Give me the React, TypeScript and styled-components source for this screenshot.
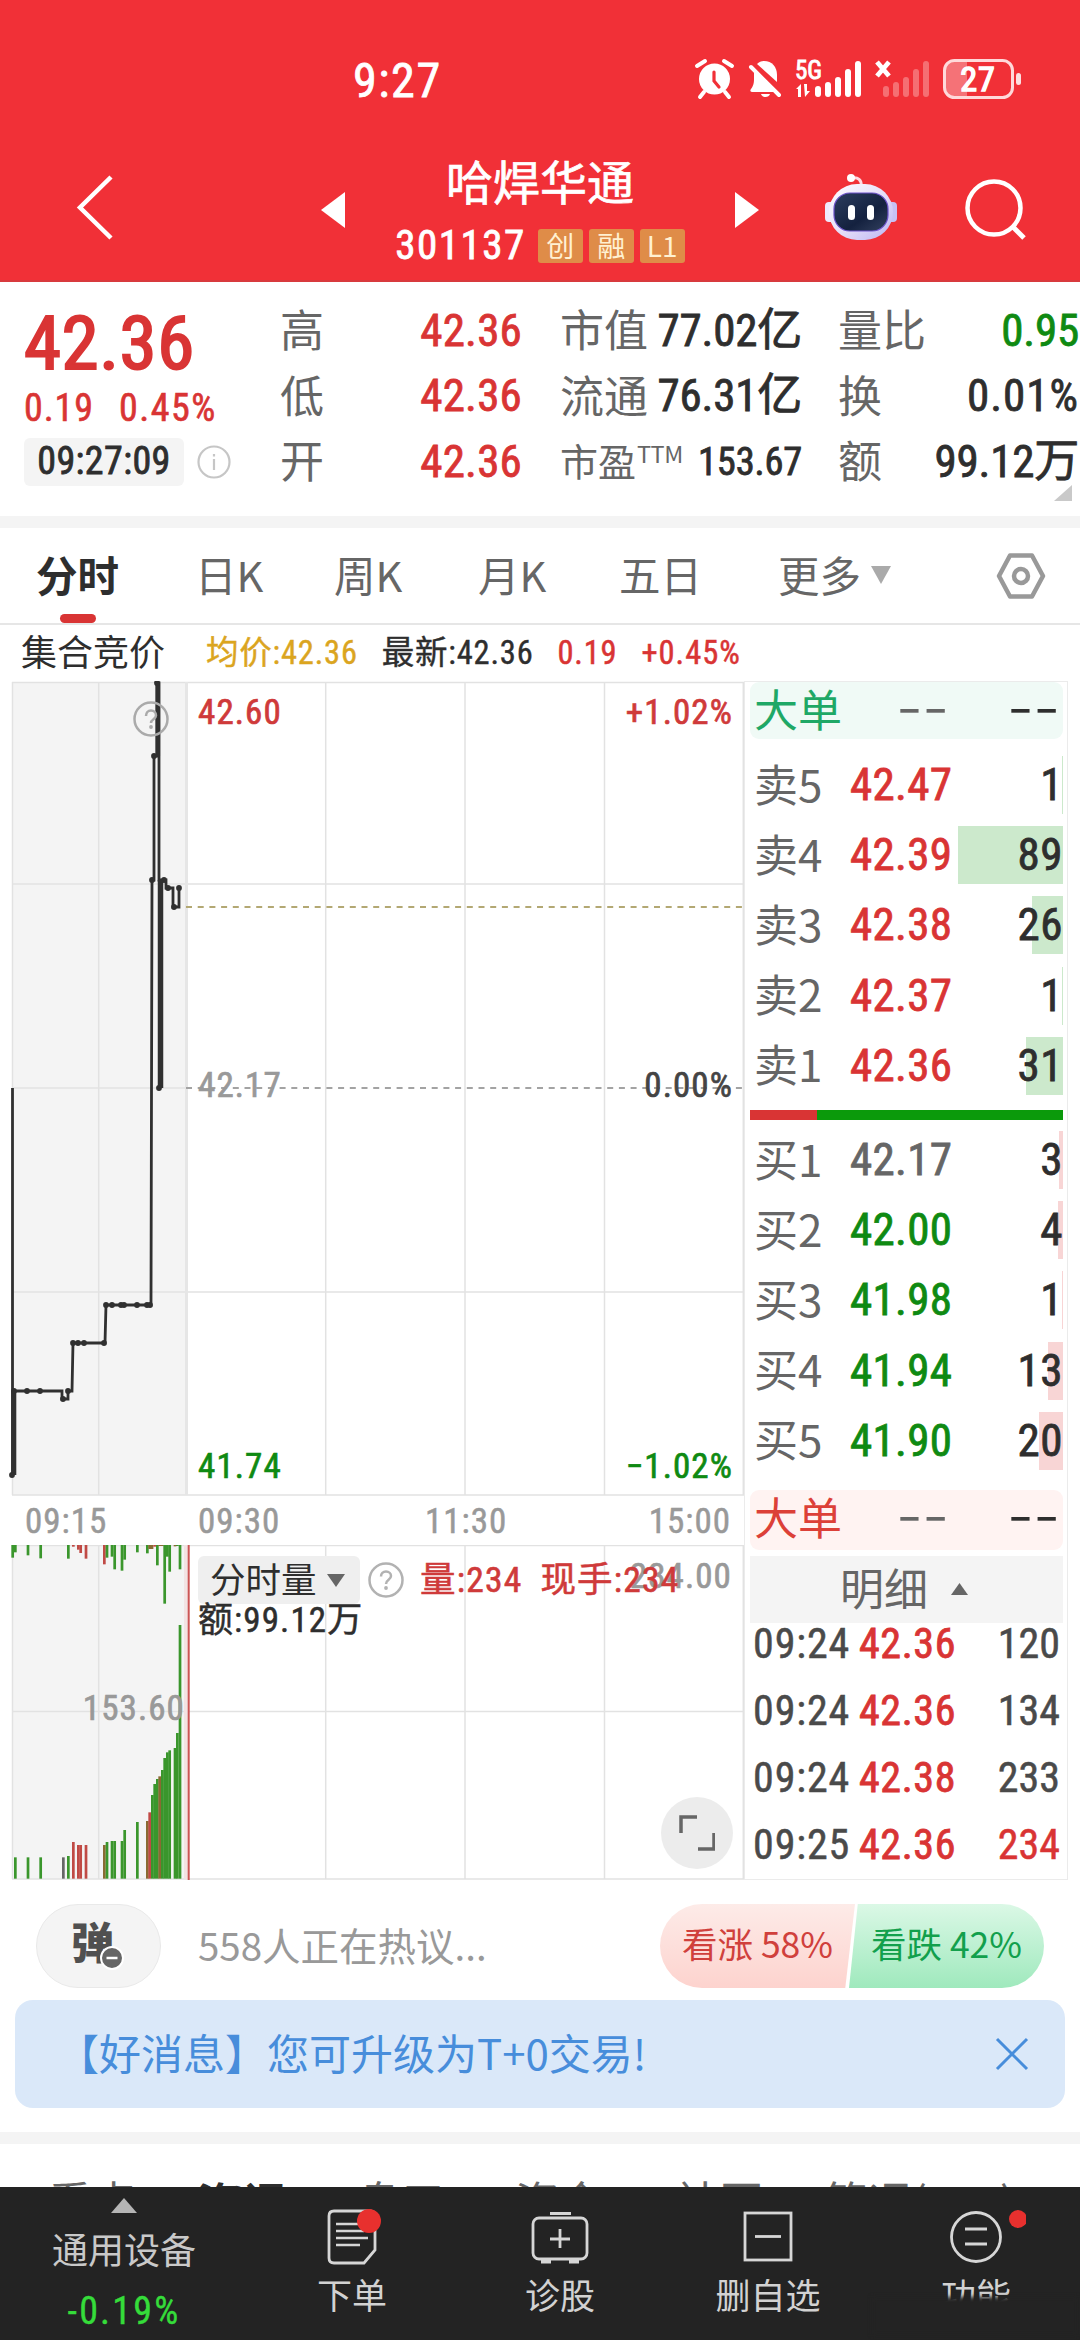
import React from 'react';
import styled, { createGlobalStyle, css } from 'styled-components';

const RED = '#d93434';
const GREEN = '#0f8a12';
const INK = '#2e2e2e';
const GREY = '#666';
const NUM = '"Roboto Condensed", Roboto, "Noto Sans CJK SC", sans-serif';
const CJK = '"Noto Sans CJK SC", "Noto Sans", sans-serif';

const Global = createGlobalStyle`
  * { box-sizing: border-box; }
  html, body { margin: 0; padding: 0; background: #fff; }
  body { font-family: ${CJK}; color: ${INK}; }
  svg { display: block; flex: none; }
`;

const Screen = styled.div`
  width: 1080px;
  height: 2340px;
  overflow: hidden;
  display: flex;
  flex-direction: column;
  background: #fff;
`;

const Num = styled.span<{ $size?: number; $color?: string; $ls?: number; $bold?: number }>`
  font-family: ${NUM};
  font-size: ${p => p.$size ?? 45}px;
  line-height: 1.2;
  color: ${p => p.$color ?? INK};
  letter-spacing: ${p => p.$ls ?? 0}px;
  -webkit-text-stroke: ${p => p.$bold ?? 0.8}px currentColor;
  white-space: nowrap;
`;

const Word = styled.span<{ $size?: number; $color?: string; $weight?: number; $ls?: number; $stroke?: number }>`
  font-family: ${CJK};
  font-size: ${p => p.$size ?? 44}px;
  line-height: 1.2;
  padding-bottom: 4px;
  color: ${p => p.$color ?? GREY};
  font-weight: ${p => p.$weight ?? 400};
  letter-spacing: ${p => p.$ls ?? 0}px;
  -webkit-text-stroke: ${p => p.$stroke ?? 0}px currentColor;
  white-space: nowrap;
`;

/* ---------- header ---------- */
const Header = styled.header`
  flex: none;
  height: 282px;
  background: #f13037;
  border-bottom: 2px solid #d83a3e;
`;
const StatusBar = styled.div`
  height: 144px;
  padding: 52px 58px 0 353px;
  display: flex;
  align-items: flex-start;
  justify-content: space-between;
  & > svg { margin-top: 3px; }
`;
const TitleBar = styled.div`
  display: grid;
  grid-template-columns: 321px 438px 1fr;
`;
const BackArea = styled.div`padding: 30px 0 0 75px;`;
const TitleArea = styled.div`
  display: grid;
  grid-template-columns: 24px 1fr 24px;
`;
const Arrow = styled.div`padding-top: 48px;`;
const TitleText = styled.div`
  display: flex;
  flex-direction: column;
  align-items: center;
  padding-top: 8px;
`;
const CodeLine = styled.div`
  display: flex;
  align-items: center;
  gap: 6px;
  margin-top: 9px;
`;
const Code = styled(Num)`margin-right: 6px;`;
const Tag = styled.span`
  min-width: 45px;
  height: 34px;
  padding: 0 7px;
  border-radius: 3px;
  background: #df8c48;
  color: #fff1d2;
  font: 400 28px/32px ${CJK};
  text-align: center;
`;
const HeaderTools = styled.div`
  display: flex;
  padding: 28px 0 0 65px;
  gap: 66px;
`;

function StatusIcons() {
  const tops = [86, 82, 77, 69, 61];
  const xs = [815, 825, 835, 845, 855];
  return (
    <svg width="332" height="50" viewBox="690 55 332 50">
      <g fill="#fff">
        <circle cx="714.500" cy="79" r="15.500" />
        <path d="M704 92l-4 5M725 92l4 5M697 66l8-5M732 66l-8-5" stroke="#fff" strokeWidth="4" strokeLinecap="round" />
        <path d="M714 72v9l5 6" stroke="#f13037" strokeWidth="3.200" fill="none" strokeLinecap="round" />
        <path d="M757 64c2-2 4-3 7-3 8 0 13 6 13 14v7z" />
        <path d="M752 92c-2 0-2-2-1-3 2-3 3-5 3-10V70l22 22z" />
        <path d="M751 67l28 28" stroke="#fff" strokeWidth="4" strokeLinecap="round" />
        <path d="M761 94h9c-1 4-8 4-9 0z" />
        {xs.map((x, i) => <rect key={x} x={x} y={tops[i]} width="6" height={97 - tops[i]} rx="3" />)}
        <path d="M796 89l5-5v13h-3v-8zM804 84h3v7h3l-5 6z" />
        <path d="M877 62l12 14M889 62l-12 14" stroke="#fff" strokeWidth="4.800" />
        <g opacity=".3">
          {xs.map((x, i) => <rect key={x} x={x + 68} y={tops[i]} width="6" height={97 - tops[i]} rx="3" />)}
        </g>
        <path d="M954 61h13v36h-13q-9 0-9-9V70q0-9 9-9z" opacity=".32" />
        <rect x="944.500" y="60.500" width="68" height="37" rx="10" fill="none" stroke="#ffd9da" strokeWidth="3" />
        <rect x="1016" y="73" width="5" height="12" rx="2.500" opacity=".85" />
      </g>
      <text x="795" y="79" fill="#fff" stroke="#fff" strokeWidth=".9" fontFamily="Roboto Condensed" fontSize="25">5G</text>
      <text x="978" y="91" fill="#fff" stroke="#fff" strokeWidth="1.500" textAnchor="middle" fontFamily="Roboto Condensed" letterSpacing="1" fontSize="34">27</text>
    </svg>
  );
}

function Robot() {
  return (
    <svg width="74" height="70" viewBox="824 172 74 70">
      <defs>
        <linearGradient id="shell" x1="0" y1="0" x2="1" y2="1">
          <stop offset="0" stopColor="#fff" /><stop offset=".55" stopColor="#e4dcf8" /><stop offset="1" stopColor="#b9b4f3" />
        </linearGradient>
        <linearGradient id="visor" x1="0" y1="0" x2="1" y2="1">
          <stop offset="0" stopColor="#2c3d5e" /><stop offset=".6" stopColor="#14213f" /><stop offset="1" stopColor="#33415f" />
        </linearGradient>
      </defs>
      <path d="M861 186c1-6-3-9-9-8" stroke="#ffd9e2" strokeWidth="3" fill="none" />
      <circle cx="851" cy="178" r="4" fill="#fff" />
      <rect x="825" y="202" width="10" height="20" rx="4" fill="#efe9fc" />
      <rect x="887" y="202" width="10" height="20" rx="4" fill="#c7c1f4" />
      <rect x="829" y="184" width="64" height="56" rx="28" fill="url(#shell)" />
      <rect x="834" y="193" width="54" height="38" rx="16" fill="url(#visor)" stroke="#6a50c8" strokeWidth="1.200" />
      <rect x="848" y="205" width="7" height="15" rx="3.500" fill="#fff" />
      <rect x="867" y="205" width="7" height="15" rx="3.500" fill="#fff" />
    </svg>
  );
}

/* ---------- quote ---------- */
const Quote = styled.section`
  flex: none;
  height: 234px;
  display: grid;
  grid-template-columns: 280px 280px 278px 242px;
`;
const PriceCell = styled.div`
  padding: 16px 0 0 24px;
  display: flex;
  flex-direction: column;
  align-items: flex-start;
`;
const ChangeLine = styled.div`display: flex; gap: 25px; margin-top: -2px;`;
const TimeLine = styled.div`display: flex; align-items: center; gap: 12px; margin-top: 6px;`;
const TimeChip = styled.div`
  width: 160px;
  height: 48px;
  border-radius: 6px;
  background: #f4f4f4;
  display: flex;
  align-items: center;
  justify-content: center;
`;
const Stats = styled.div<{ $right: number }>`
  padding: 16px ${p => p.$right}px 0 0;
  display: grid;
  grid-auto-rows: 65.500px;
`;
const Stat = styled.div`
  display: flex;
  justify-content: space-between;
  align-items: center;
`;
const Sup = styled.sup`
  font: 400 23.500px/1 ${CJK};
  letter-spacing: -0.5px;
  vertical-align: 13px;
  margin-left: 1px;
`;
const LastStats = styled(Stats)`position: relative;`;
const Corner = styled.svg`position: absolute; right: 8px; bottom: 15px;`;
const Band = styled.div<{ $top?: number }>`
  flex: none;
  height: 12px;
  margin-top: ${p => p.$top ?? 0}px;
  background: #f4f4f4;
`;

type S = [React.ReactNode, string, string, number?];
const col2: S[] = [['高', '42.36', RED], ['低', '42.36', RED], ['开', '42.36', RED]];
const col3: S[] = [['市值', '77.02亿', INK], ['流通', '76.31亿', INK], ['ttm', '153.67', INK, 38.5]];
const col4: S[] = [['量比', '0.95', GREEN], ['换', '0.01%', INK], ['额', '99.12万', INK]];

const StatRows = ({ rows, ls }: { rows: S[]; ls: number }) => (
  <>
    {rows.map(([label, value, color, size], i) => (
      <Stat key={i}>
        {label === 'ttm' ? <Word $size={38}>市盈<Sup>TTM</Sup></Word> : <Word>{label}</Word>}
        <Num $color={color} $size={size} $ls={value.endsWith('%') ? 1 : ls}>{value}</Num>
      </Stat>
    ))}
  </>
);

/* ---------- tabs ---------- */
const Tabs = styled.nav`
  flex: none;
  height: 97px;
  border-bottom: 2px solid #e6e6e6;
  padding: 0 33px 0 36px;
  display: grid;
  grid-template-columns: 159px 139px 144px 141px 159px 1fr auto;
  align-items: center;
`;
const Tab = styled.div<{ $active?: boolean }>`
  height: 95px;
  padding-bottom: 2px;
  position: relative;
  display: flex;
  align-items: center;
  gap: 9px;
  font: 400 41.500px/1 ${CJK};
  color: ${GREY};
  ${p => p.$active && css`
    font-weight: 700;
    color: ${INK};
    &::after {
      content: '';
      position: absolute;
      left: 24px;
      bottom: 0;
      width: 36px;
      height: 9px;
      border-radius: 5px;
      background: ${RED};
    }
  `}
`;

const InfoLine = styled.div`
  flex: none;
  height: 56px;
  padding-left: 21px;
  display: flex;
  align-items: center;
`;
const InfoItem = styled(Num)<{ $gap: number }>`margin-left: ${p => p.$gap}px;`;

/* ---------- market body ---------- */
const Market = styled.section`
  flex: none;
  height: 1199px;
  display: grid;
  grid-template-columns: 744px 324px;
`;
const Charts = styled.div`display: flex; flex-direction: column;`;
const TimeAxis = styled.div`
  height: 49px;
  padding: 2px 13px 0 25px;
  display: grid;
  grid-template-columns: 173px 227px 1fr auto;
  align-items: center;
`;
const VolumeArea = styled.div`position: relative; height: 335px;`;
const VolumeHead = styled.div`
  position: absolute;
  left: 198px;
  top: 11px;
`;
const HeadLine = styled.div`display: flex; align-items: center; height: 48px; margin-bottom: -4px;`;
const Picker = styled.div`
  width: 162px;
  height: 48px;
  border-radius: 6px;
  background: #efefef;
  display: flex;
  align-items: center;
  gap: 10px;
  padding-left: 12px;
  margin-right: 8px;
`;
const Expand = styled.div`
  position: absolute;
  left: 661px;
  top: 252px;
  width: 72px;
  height: 72px;
  border-radius: 50%;
  background: #ececec;
  display: grid;
  place-items: center;
`;

const Help = () => (
  <svg width="36" height="36" viewBox="0 0 36 36">
    <circle cx="18" cy="18" r="16.500" fill="none" stroke="#b2b2b2" strokeWidth="2.500" />
    <path d="M13 14.500c0-3 2-5 5-5s5 2 5 4.500c0 4-5 3.500-5 8" fill="none" stroke="#b2b2b2" strokeWidth="2.500" />
    <circle cx="18" cy="26" r="1.900" fill="#b2b2b2" />
  </svg>
);

const Label = styled.text`
  font-family: ${NUM};
  font-size: 35px;
  letter-spacing: 1.1px;
  stroke: currentColor;
  stroke-width: 0.7px;
`;

const pricePath =
  'M12.5 1088V1475M14 1391H62V1399H68V1391H72L73 1343H105L106 1305H151L152 880H154V756H157V683H159V880H166V888H173V907H179V888H181';
const dots: [number, number][] = [
  [12, 1475], [14, 1391], [27, 1391], [40, 1391], [63, 1399], [68, 1391], [73, 1343], [78, 1343], [84, 1343], [104, 1343],
  [106, 1305], [112, 1305], [121, 1305], [124, 1305], [137, 1305], [147, 1305], [150, 1305], [152, 880], [154, 756],
  [157, 683], [159, 1088], [164, 880], [168, 888], [174, 907], [179, 888],
];

function PriceChart() {
  return (
    <svg width="744" height="815" viewBox="0 681 744 815">
      <rect x="12" y="682" width="174" height="813" fill="#f4f4f4" />
      <g stroke="#e2e2e2" strokeWidth="1.500">
        <path d="M12 682.500H744M12 884H744M12 1088H186M12 1292H744M12 1495H744" />
        <path d="M12.500 682V1495M98.700 682V1495M325.700 682V1495M465 682V1495M604.500 682V1495" />
        <path d="M186.500 682V1495" strokeWidth="3" stroke="#e6e6e6" />
        <path d="M743.300 682V1495" />
      </g>
      <path d="M186 907H744" stroke="#b3a873" strokeWidth="1.800" strokeDasharray="6 5.700" />
      <path d="M186 1088H744" stroke="#a3a3a3" strokeWidth="1.800" strokeDasharray="6 5.700" />
      <g stroke="#303030" fill="none">
        <path d={pricePath} strokeWidth="2.800" />
        <path d="M13.800 1391V1475" strokeWidth="5" />
        <path d="M157.800 683V756" strokeWidth="4.500" />
        <path d="M160.500 880V1088" strokeWidth="5.500" />
      </g>
      {dots.map(([x, y]) => <circle key={`${x}-${y}`} cx={x} cy={y} r="2.900" fill="#303030" />)}
      <g fill="none" stroke="#aaa" strokeWidth="2.500">
        <circle cx="151" cy="719" r="16.500" />
        <path d="M146 716c0-3 2-5.500 5-5.500s5 2 5 5c0 4-5 3.500-5 7.500" />
      </g>
      <circle cx="151" cy="727" r="1.900" fill="#aaa" />
      <Label x="198" y="723.500" fill="#cf3a3a" color="#cf3a3a">42.60</Label>
      <Label x="733" y="723.500" fill="#cf3a3a" color="#cf3a3a" textAnchor="end">+1.02%</Label>
      <Label x="198" y="1097" fill="#999" color="#999">42.17</Label>
      <Label x="733" y="1097" fill="#444" color="#444" textAnchor="end">0.00%</Label>
      <Label x="198" y="1478" fill={GREEN} color={GREEN}>41.74</Label>
      <Label x="733" y="1478" fill={GREEN} color={GREEN} textAnchor="end">−1.02%</Label>
    </svg>
  );
}

const G = '#3a962c', R = '#c04a45', B = '#8a6a33', D = '#666';
type Bar = [number, number, string];
const hanging: Bar[] = [
  [34, 38, G], [42, 22, G], [80, 31, G], [118, 40, G], [201, 41, G], [216, 5, R], [231, 14, R], [238, 24, R], [254, 41, R],
  [309, 58, R], [317, 38, G], [332, 35, G], [340, 73, G], [362, 77, G], [370, 44, G], [408, 22, G], [438, 25, G], [445, 12, B],
  [452, 12, B], [460, 5, R], [468, 61, G], [475, 3, B], [483, 3, B], [490, 176, G], [498, 35, G], [505, 80, G], [521, 4, B], [528, 3, G], [536, 73, G],
];
const standing: Bar[] = [
  [42, 1132, G], [80, 1132, G], [118, 1132, G], [186, 1132, D], [201, 1128, G], [216, 1086, R], [231, 1095, R], [238, 1095, R],
  [254, 1095, R], [309, 1095, B], [317, 1086, G], [332, 1083, G], [340, 1083, G], [362, 1083, G], [370, 1050, G], [408, 1026, G],
  [438, 1023, B], [445, 997, R], [453, 945, G], [460, 912, G], [468, 897, G], [475, 889, B], [483, 870, G], [490, 834, G],
  [498, 817, G], [505, 811, G], [521, 804, G], [528, 759, G], [536, 435, G],
];

function VolumeChart() {
  return (
    <svg width="744" height="335" viewBox="0 1545 744 335">
      <rect x="12" y="1545" width="174" height="334" fill="#f4f4f4" />
      <path
        d="M12 1545.500H744M12 1711.500H744M12 1879H744M12.500 1545V1879M98.700 1545V1879M325.700 1545V1879M465 1545V1879M604.500 1545V1879M743.300 1545V1879"
        stroke="#e2e2e2" strokeWidth="1.500"
      />
      <rect x="184" y="1545" width="4" height="334" fill="#f3e3e3" />
      {hanging.map(([x, h, c]) => <rect key={x} x={x / 3} y="1544" width="2.700" height={h / 3 + 1} fill={c} />)}
      {standing.map(([x, y, c]) => <rect key={x} x={x / 3} y={1480 + y / 3} width="2.700" height={(1196 - y) / 3} fill={c} />)}
      <path d="M188.700 1545V1880" stroke="#c55" strokeWidth="2" />
      <Label x="185" y="1720" fill="#999" color="#999" textAnchor="end">153.60</Label>
      <Label x="732" y="1587.500" fill="#999" color="#999" textAnchor="end">234.00</Label>
    </svg>
  );
}

/* ---------- order book ---------- */
const Book = styled.aside`
  border: 1.500px solid #ebebeb;
  padding: 0 4px 0 5px;
`;
const BigOrder = styled.div<{ $bg: string; $top: number; $bottom: number; $h: number }>`
  height: ${p => p.$h}px;
  margin-top: ${p => p.$top}px;
  margin-bottom: ${p => p.$bottom}px;
  border-radius: 9px;
  background: ${p => p.$bg};
  display: grid;
  grid-template-columns: 143px 111px auto;
  align-items: center;
  padding: 0 0 2px 4px;
`;
const Dashes = styled.span<{ $color: string }>`
  font: 300 74px/50px ${CJK};
  letter-spacing: 1.500px;
  height: 50px;
  margin-top: -23px;
  color: ${p => p.$color};
  white-space: nowrap;
`;
const Level = styled.div`
  height: 70.200px;
  display: grid;
  grid-template-columns: 96px 106px 1fr;
  align-items: center;
  padding-left: 4px;
`;
const Qty = styled.div`
  position: relative;
  height: 58px;
  display: flex;
  align-items: center;
  justify-content: flex-end;
`;
const QtyBar = styled.i<{ $bg: string }>`
  position: absolute;
  right: 0;
  top: 0;
  height: 58px;
  background: ${p => p.$bg};
`;
const QtyText = styled(Num)`position: relative;`;
const Ratio = styled.div`
  height: 10px;
  margin: 9px 0 5px;
  display: grid;
  grid-template-columns: 67px 1fr;
  background: #0b9a0b;
  &::before { content: ''; background: ${RED}; }
`;
const DetailHead = styled.div`
  height: 67px;
  background: #f4f4f4;
  display: flex;
  align-items: center;
  gap: 23px;
  padding-left: 90px;
`;
const Trades = styled.div`margin-top: -12px;`;
const Trade = styled.div`
  height: 67px;
  display: grid;
  grid-template-columns: 106px 1fr auto;
  align-items: center;
  padding: 0 3px 0 3px;
`;

type L = [string, string, number, string];
const sells: L[] = [['卖5', '42.47', 1, RED], ['卖4', '42.39', 89, RED], ['卖3', '42.38', 26, RED], ['卖2', '42.37', 1, RED], ['卖1', '42.36', 31, RED]];
const buys: L[] = [['买1', '42.17', 3, GREY], ['买2', '42.00', 4, GREEN], ['买3', '41.98', 1, GREEN], ['买4', '41.94', 13, GREEN], ['买5', '41.90', 20, GREEN]];
const trades: [string, string, string, string][] = [
  ['09:24', '42.36', '120', '#4a4a4a'], ['09:24', '42.36', '134', '#4a4a4a'], ['09:24', '42.38', '233', '#4a4a4a'], ['09:25', '42.36', '234', RED],
];

const Levels = ({ rows, bar }: { rows: L[]; bar: string }) => (
  <>
    {rows.map(([name, price, qty, color]) => (
      <Level key={name}>
        <Word>{name}</Word>
        <Num $color={color} $ls={0.3}>{price}</Num>
        <Qty>
          <QtyBar $bg={bar} style={{ width: Math.max(1, qty * 1.18) }} />
          <QtyText $ls={0.5}>{qty}</QtyText>
        </Qty>
      </Level>
    ))}
  </>
);

/* ---------- discussion ---------- */
const Talk = styled.section`
  flex: none;
  height: 108px;
  padding: 12px 36px 0;
  margin-top: 12px;
  display: flex;
  align-items: flex-start;
`;
const Bullet = styled.div`
  position: relative;
  width: 125px;
  height: 84px;
  border-radius: 42px;
  background: #f4f4f4;
  border: 1px solid #e9e9e9;
  padding: 10px 0 0 34px;
`;
const BulletBadge = styled.svg`position: absolute; left: 62px; top: 40px;`;
const Hot = styled(Word)`line-height: 81px; margin-left: 37px; flex: 1;`;
const Vote = styled.div`
  display: flex;
  width: 384px;
  height: 84px;
  border-radius: 42px;
  overflow: hidden;
`;
const VoteHalf = styled.div<{ $up?: boolean }>`
  width: 195px;
  flex: none;
  text-align: center;
  font: 400 35.500px/78px ${CJK};
  color: ${p => (p.$up ? '#d0403c' : '#12a04c')};
  background: ${p => (p.$up ? 'linear-gradient(#fdebe8, #fdd3ce)' : 'linear-gradient(#dbf8e6, #9fe9bd)')};
  clip-path: ${p => (p.$up ? 'polygon(0 0, 100% 0, 95% 100%, 0 100%)' : 'polygon(4.500% 0, 100% 0, 100% 100%, 0 100%)')};
  margin-left: ${p => (p.$up ? 0 : -6)}px;
`;
const Notice = styled.div`
  flex: none;
  height: 108px;
  margin: 0 15px;
  padding: 0 36px 0 42px;
  border-radius: 18px;
  background: #dae8f9;
  display: flex;
  align-items: center;
  justify-content: space-between;
`;
const NextTabs = styled.nav`
  flex: none;
  height: 43px;
  overflow: hidden;
  padding: 30px 0 0 48px;
  display: grid;
  grid-template-columns: 149px 160px 158px 160px 149px auto;
`;

/* ---------- bottom bar ---------- */
const Bottom = styled.footer`
  flex: none;
  height: 153px;
  background: #232323;
  display: grid;
  grid-template-columns: 248px 208px 208px 208px 208px;
`;
const IndexCell = styled.div`
  display: flex;
  flex-direction: column;
  align-items: center;
  padding-top: 11px;
`;
const IndexName = styled(Word)`margin-top: 14px;`;
const IndexValue = styled(Num)`margin-top: 15px;`;
const Action = styled.div`
  position: relative;
  display: flex;
  flex-direction: column;
  align-items: center;
  padding-top: 20px;
  gap: 8px;
`;
const Smudge = styled.div`
  position: absolute;
  left: 0;
  top: 110px;
  width: 206px;
  height: 38px;
  background: #232323;
  filter: blur(2px);
`;

const Ic = ({ children }: { children: React.ReactNode }) => (
  <svg width="100" height="58" viewBox="-50 -29 100 58" fill="none" stroke="#d6d6d6" strokeWidth="2.800">{children}</svg>
);

export default function App() {
  return (
    <Screen>
      <Global />
      <Header>
        <StatusBar>
          <Num $size={48} $color="#fff" $ls={1.6}>9:27</Num>
          <StatusIcons />
        </StatusBar>
        <TitleBar>
          <BackArea>
            <svg width="40" height="68" viewBox="0 0 40 68"><path d="M36 3L5 33.500L36 64" fill="none" stroke="#fff" strokeWidth="4.500" /></svg>
          </BackArea>
          <TitleArea>
            <Arrow><svg width="24" height="36" viewBox="0 0 24 36"><path d="M24 0V36L0 18z" fill="#fff" /></svg></Arrow>
            <TitleText>
              <Word $size={47} $color="#fff" $stroke={0.7}>哈焊华通</Word>
              <CodeLine>
                <Code $size={41} $color="#fff" $ls={1.5}>301137</Code>
                <Tag>创</Tag><Tag>融</Tag><Tag>L1</Tag>
              </CodeLine>
            </TitleText>
            <Arrow><svg width="24" height="36" viewBox="0 0 24 36"><path d="M0 0V36L24 18z" fill="#fff" /></svg></Arrow>
          </TitleArea>
          <HeaderTools>
            <Robot />
            <svg width="64" height="70" viewBox="964 172 64 70" fill="none" stroke="#fff">
              <circle cx="994" cy="208" r="26.500" strokeWidth="4.500" />
              <path d="M1013 227l11 11" strokeWidth="5" />
            </svg>
          </HeaderTools>
        </TitleBar>
      </Header>

      <Quote>
        <PriceCell>
          <Num $size={75} $color={RED} $bold={2} $ls={0.6}>42.36</Num>
          <ChangeLine>
            <Num $size={38} $color={RED} $bold={0.6} $ls={0.9}>0.19</Num>
            <Num $size={38} $color={RED} $bold={0.6} $ls={1.5}>0.45%</Num>
          </ChangeLine>
          <TimeLine>
            <TimeChip><Num $size={38} $ls={0.4}>09:27:09</Num></TimeChip>
            <svg width="36" height="36" viewBox="0 0 36 36" fill="none" stroke="#c6c6c6" strokeWidth="2.200">
              <circle cx="18" cy="18" r="15.500" /><path d="M18 15v11M18 10v2.500" />
            </svg>
          </TimeLine>
        </PriceCell>
        <Stats $right={38}><StatRows rows={col2} ls={0.2} /></Stats>
        <Stats $right={36}><StatRows rows={col3} ls={-0.2} /></Stats>
        <LastStats $right={1}>
          <StatRows rows={col4} ls={-0.2} />
          <Corner width="18" height="16" viewBox="0 0 18 16"><path d="M18 0V16H0z" fill="#c9c9c9" /></Corner>
        </LastStats>
      </Quote>
      <Band />

      <Tabs>
        <Tab $active>分时</Tab>
        <Tab>日K</Tab>
        <Tab>周K</Tab>
        <Tab>月K</Tab>
        <Tab>五日</Tab>
        <Tab>
          更多
          <svg width="22" height="18" viewBox="0 0 22 18"><path d="M1 0H21L11 18z" fill="#aaa" /></svg>
        </Tab>
        <svg width="52" height="50" viewBox="-26 -25 52 50" fill="none" stroke="#999" strokeWidth="4.500">
          <path d="M-11-20.500H11L22 0L11 20.500H-11L-22 0z" strokeLinejoin="round" /><circle r="7" />
        </svg>
      </Tabs>

      <InfoLine>
        <Word $size={36} $color={INK}>集合竞价</Word>
        <InfoItem $size={32.5} $color="#dba51f" $gap={41} $ls={0.8} $bold={0.4}>均价:42.36</InfoItem>
        <InfoItem $size={32.5} $gap={24} $ls={0.8} $bold={0.4}>最新:42.36</InfoItem>
        <InfoItem $size={32.5} $color={RED} $gap={24} $ls={0.8} $bold={0.5}>0.19</InfoItem>
        <InfoItem $size={32.5} $color={RED} $gap={24} $ls={1} $bold={0.5}>+0.45%</InfoItem>
      </InfoLine>

      <Market>
        <Charts>
          <PriceChart />
          <TimeAxis>
            <Num $size={35} $color="#999" $bold={0.5} $ls={1}>09:15</Num>
            <Num $size={35} $color="#999" $bold={0.5} $ls={1}>09:30</Num>
            <Num $size={35} $color="#999" $bold={0.5} $ls={1}>11:30</Num>
            <Num $size={35} $color="#999" $bold={0.5} $ls={1}>15:00</Num>
          </TimeAxis>
          <VolumeArea>
            <VolumeChart />
            <VolumeHead>
              <HeadLine>
                <Picker>
                  <Word $size={35.5} $color={INK}>分时量</Word>
                  <svg width="18" height="13" viewBox="0 0 18 13"><path d="M0 0H18L9 13z" fill={GREY} /></svg>
                </Picker>
                <Help />
                <InfoItem $size={35.5} $color="#cf3a3a" $gap={16} $ls={1.2} $bold={0.6}>量:234</InfoItem>
                <InfoItem $size={35.5} $color="#cf3a3a" $gap={18} $ls={1.2} $bold={0.6}>现手:234</InfoItem>
              </HeadLine>
              <Num $size={35} $bold={0.5} $ls={1.1}>额:99.12万</Num>
            </VolumeHead>
            <Expand>
              <svg width="36" height="36" viewBox="0 0 36 36" fill="none" stroke="#666" strokeWidth="3.500">
                <path d="M2 18V2H18M19 34H35V18" />
              </svg>
            </Expand>
          </VolumeArea>
        </Charts>

        <Book>
          <BigOrder $bg="#f0faf6" $top={0} $bottom={11} $h={57}>
            <Word $color="#1fa866">大单</Word>
            <Dashes $color={GREY}>--</Dashes>
            <Dashes $color={INK}>--</Dashes>
          </BigOrder>
          <Levels rows={sells} bar="#cce9cc" />
          <Ratio />
          <Levels rows={buys} bar="#f8d5d5" />
          <BigOrder $bg="#fff3f2" $top={14} $bottom={6} $h={60}>
            <Word $color="#dc4038">大单</Word>
            <Dashes $color={GREY}>--</Dashes>
            <Dashes $color={INK}>--</Dashes>
          </BigOrder>
          <DetailHead>
            <Word>明细</Word>
            <svg width="17" height="12" viewBox="0 0 17 12"><path d="M0 12H17L8.500 0z" fill={GREY} /></svg>
          </DetailHead>
          <Trades>
            {trades.map(([t, p, q, c], i) => (
              <Trade key={i}>
                <Num $size={42} $color="#4a4a4a" $bold={0.5} $ls={0.9}>{t}</Num>
                <Num $size={42} $color={RED} $ls={0.6}>{p}</Num>
                <Num $size={42} $color={c} $bold={0.5}>{q}</Num>
              </Trade>
            ))}
          </Trades>
        </Book>
      </Market>

      <Talk>
        <Bullet>
          <Word $size={43} $color="#505050" $weight={800}>弹</Word>
          <BulletBadge width="26" height="26" viewBox="-13 -13 26 26">
            <circle r="11" fill={GREY} stroke="#fff" strokeWidth="2" /><path d="M-5.500 0H5.500" stroke="#fff" strokeWidth="2.500" />
          </BulletBadge>
        </Bullet>
        <Hot $size={38.5} $color="#999">558人正在热议...</Hot>
        <Vote>
          <VoteHalf $up>看涨 58%</VoteHalf>
          <VoteHalf>看跌 42%</VoteHalf>
        </Vote>
      </Talk>
      <Notice>
        <Word $size={42} $color="#478ddb">【好消息】您可升级为T+0交易!</Word>
        <svg width="34" height="34" viewBox="0 0 34 34"><path d="M2 2L32 32M32 2L2 32" stroke="#478ddb" strokeWidth="3" /></svg>
      </Notice>
      <Band $top={24} />
      <NextTabs>
        <Word>看点</Word>
        <Word $size={46} $weight={700} $color={INK}>资讯</Word>
        <Word>盘口</Word>
        <Word>资金</Word>
        <Word>社区</Word>
        <Word>简况(F10)</Word>
      </NextTabs>

      <Bottom>
        <IndexCell>
          <svg width="26" height="15" viewBox="0 0 26 15"><path d="M0 15H26L13 0z" fill="#b5b5b5" /></svg>
          <IndexName $size={36} $color="#c9c9c9">通用设备</IndexName>
          <IndexValue $size={38} $color="#35dc3a" $bold={0.4} $ls={2.2}>-0.19%</IndexValue>
        </IndexCell>
        <Action>
          <Ic>
            <path d="M-18-25H18Q23-25 23-20V14L12 27H-18Q-23 27-23 22V-20Q-23-25-18-25z" />
            <path d="M-16-12H10M-16-5H12M-16 2H16M-16 9H8" strokeWidth="2.500" />
            <circle cx="17" cy="-15" r="12" fill="#e8302e" stroke="none" />
          </Ic>
          <Word $size={35} $color="#d2d2d2">下单</Word>
        </Action>
        <Action>
          <Ic>
            <rect x="-27" y="-18" width="54" height="41" rx="6" /><path d="M-10-22.500H11M0-7V12M-10 3H10" />
            <path d="M-19 25.500H-9M9 25.500H19" strokeWidth="4" />
          </Ic>
          <Word $size={35} $color="#d2d2d2">诊股</Word>
        </Action>
        <Action>
          <Ic><rect x="-23" y="-23" width="46" height="47" /><path d="M-13 .5H13" /></Ic>
          <Word $size={35} $color="#d2d2d2">删自选</Word>
        </Action>
        <Action>
          <Ic>
            <circle r="24.500" cy="1" /><path d="M-11-7H11M-11 8H11" />
            <circle cx="42" cy="-17" r="9" fill="#e8302e" stroke="none" />
          </Ic>
          <Word $size={35} $color="#d2d2d2">功能</Word>
          <Smudge />
        </Action>
      </Bottom>
    </Screen>
  );
}
